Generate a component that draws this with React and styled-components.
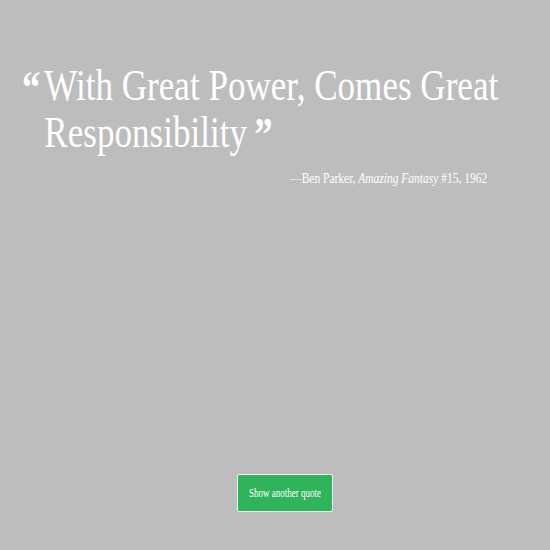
import styled, { createGlobalStyle } from "styled-components";

const GlobalStyle = createGlobalStyle`
  html, body {
    margin: 0;
    padding: 0;
    background: #bdbdbd;
  }
`;

const Page = styled.div`
  box-sizing: border-box;
  height: 100vh;
  overflow: hidden;
  display: flex;
  flex-direction: column;
  padding: 0 0 38px 22px;
  font-family: "Liberation Serif", "DejaVu Serif", serif;
  color: #fff;
`;

// condensed serif look, since no condensed face is installed
const Narrow = styled.span`
  display: inline-block;
  transform: scaleX(${(p) => p.$scale});
  transform-origin: ${(p) => p.$origin || "left"} center;
  white-space: nowrap;
`;

const Quote = styled.blockquote`
  margin: 63px 0 0;
  font-size: 44px;
  line-height: 45px;
  font-weight: 400;
`;

const Line = styled.div`
  padding-left: ${(p) => (p.$indent ? "28px" : "0")};
`;

const Mark = styled.span`
  display: inline-block;
  width: ${(p) => p.$width || "auto"};
  font-size: 46px;
  font-weight: 700;
  line-height: 45px;
  vertical-align: -3px;
  margin-left: ${(p) => p.$left || 0}px;
`;

const Cite = styled.div`
  align-self: flex-start;
  width: 465px;
  margin-top: 14px;
  text-align: right;
  font-size: 14px;
  line-height: 16px;

  em {
    font-style: italic;
  }
`;

const Footer = styled.div`
  margin-top: auto;
  display: flex;
  justify-content: flex-start;
  padding-left: 215px;
`;

const Button = styled.button`
  box-sizing: border-box;
  width: 96px;
  height: 38px;
  background: #2fb45b;
  border: 1px solid #f4fbf6;
  border-radius: 2px;
  color: #fff;
  font-family: "Liberation Serif", serif;
  font-size: 12px;
  padding: 0;
  display: flex;
  align-items: center;
  justify-content: center;
  cursor: pointer;
`;

export default function App() {
  return (
    <>
      <GlobalStyle />
      <Page>
        <Quote>
          <Narrow $scale={0.797}>
            <Line>
              <Mark $width="28px">“</Mark>With Great Power, Comes Great
            </Line>
            <Line $indent>
              Responsibility<Mark $left={9}>”</Mark>
            </Line>
          </Narrow>
        </Quote>
        <Cite>
          <Narrow $scale={0.82} $origin="right">
            —Ben Parker, <em>Amazing Fantasy</em> #15, 1962
          </Narrow>
        </Cite>
        <Footer>
          <Button>
            <Narrow $scale={0.75} $origin="center">Show another quote</Narrow>
          </Button>
        </Footer>
      </Page>
    </>
  );
}
